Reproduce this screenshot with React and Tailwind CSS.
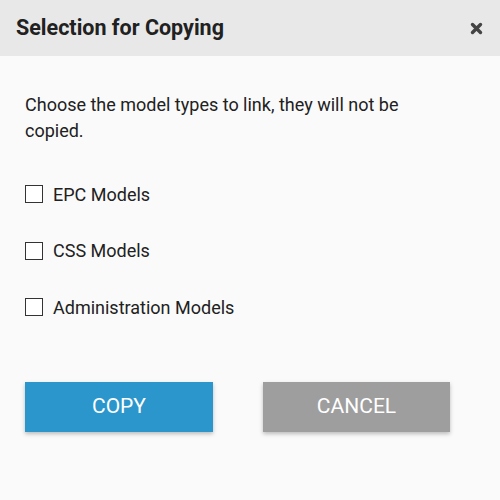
import React from 'react';

const models = ['EPC Models', 'CSS Models', 'Administration Models'];

export default function App() {
  const [checked, setChecked] = React.useState({});

  return (
    <div className="w-[500px] h-[500px] bg-[#fafafa] text-[#212121]" style={{ fontFamily: 'Roboto, "Liberation Sans", sans-serif' }}>
      <div className="h-[56px] bg-[#e8e8e8] flex items-center justify-between pl-4 pr-[17px]">
        <h1 className="text-[21.5px] font-bold text-[#212121]">Selection for Copying</h1>
        <button className="w-[13px] h-[13px] flex items-center justify-center text-[#444]">
          <svg width="13" height="13" viewBox="0 0 13 13">
            <path d="M2.5 2.5L10.5 10.5M10.5 2.5L2.5 10.5" stroke="currentColor" strokeWidth="3.4" strokeLinecap="round" />
          </svg>
        </button>
      </div>

      <div className="px-[25px] pt-[36px]">
        <p className="text-[18px] leading-[26px] pr-[20px]">Choose the model types to link, they will not be copied.</p>

        <div className="mt-[38px] flex flex-col gap-[32.5px]">
          {models.map((m) => (
            <label key={m} className="flex items-center gap-[10px] h-[24px] text-[18px] cursor-pointer">
              <input
                type="checkbox"
                checked={!!checked[m]}
                onChange={() => setChecked({ ...checked, [m]: !checked[m] })}
                className="appearance-none w-[18px] h-[18px] border border-[#333] bg-white rounded-none"
              />
              <span>{m}</span>
            </label>
          ))}
        </div>

        <div className="mt-[63px] flex gap-[50px]">
          <button className="w-[188px] h-[50px] bg-[#2b96cc] text-white text-[21px] uppercase shadow-[0_2px_4px_rgba(0,0,0,0.25)]">Copy</button>
          <button className="w-[187px] h-[50px] bg-[#9e9e9e] text-white text-[21px] uppercase shadow-[0_2px_4px_rgba(0,0,0,0.25)]">Cancel</button>
        </div>
      </div>
    </div>
  );
}
